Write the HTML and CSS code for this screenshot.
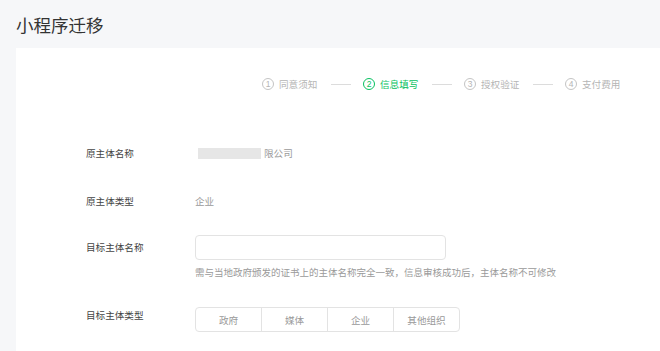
FILE: index.html
```html
<!DOCTYPE html>
<html lang="zh-CN">
<head>
<meta charset="utf-8">
<title>小程序迁移</title>
<link rel="stylesheet" href="styles.css">
</head>
<body>
<div class="page">
  <h1 class="title">小程序迁移</h1>
  <div class="card">
    <div class="steps">
      <div class="step"><span class="num">1</span><span class="step-text">同意须知</span></div>
      <span class="step-line"></span>
      <div class="step active"><span class="num">2</span><span class="step-text">信息填写</span></div>
      <span class="step-line"></span>
      <div class="step"><span class="num">3</span><span class="step-text">授权验证</span></div>
      <span class="step-line"></span>
      <div class="step"><span class="num">4</span><span class="step-text">支付费用</span></div>
    </div>
    <div class="form">
      <div class="row row-plain">
        <div class="label">原主体名称</div>
        <div class="value"><span class="mask"></span>限公司</div>
      </div>
      <div class="row row-plain row-2">
        <div class="label">原主体类型</div>
        <div class="value">企业</div>
      </div>
      <div class="row row-input">
        <div class="label label-tall">目标主体名称</div>
        <div class="field">
          <div class="input"></div>
          <div class="hint">需与当地政府颁发的证书上的主体名称完全一致，信息审核成功后，主体名称不可修改</div>
        </div>
      </div>
      <div class="row row-type">
        <div class="label">目标主体类型</div>
        <div class="btn-group">
          <span class="btn">政府</span>
          <span class="btn">媒体</span>
          <span class="btn">企业</span>
          <span class="btn">其他组织</span>
        </div>
      </div>
    </div>
  </div>
</div>
</body>
</html>
```
FILE: styles.css
```css
* { box-sizing: border-box; }
html, body {
  margin: 0;
  padding: 0;
  background: #f6f7f9;
  font-family: "Noto Sans CJK SC", "Noto Sans", sans-serif;
  color: #353535;
}
.page {
  width: 660px;
  height: 351px;
  overflow: hidden;
}
.title {
  margin: 0;
  padding: 12px 0 0 16px;
  height: 48px;
  font-size: 17.5px;
  line-height: 26px;
  font-weight: 400;
  color: #333;
}
.card {
  margin-left: 16px;
  background: #fff;
  height: 320px;
  padding: 29px 38px 0 70px;
}
.steps {
  display: flex;
  justify-content: flex-end;
  align-items: center;
  height: 14px;
  color: #b5b5b5;
  font-size: 9.6px;
}
.step {
  display: flex;
  align-items: center;
}
.num {
  width: 12px;
  height: 12px;
  border: 1px solid #c4c4c4;
  border-radius: 50%;
  display: inline-flex;
  align-items: center;
  justify-content: center;
  font-size: 8.5px;
  line-height: 1;
  margin-right: 5px;
  font-family: "Liberation Sans", sans-serif;
}
.step-text {
  width: 40px;
  white-space: nowrap;
  line-height: 14px;
}
.step.active { color: #07c160; }
.step.active .num { border-color: #07c160; }
.step-line {
  width: 20px;
  height: 1px;
  background: #dcdcdc;
  margin: 0 12px;
}
.form {
  margin-top: 50px;
  font-size: 9.6px;
}
.row {
  display: flex;
  align-items: flex-start;
}
.label {
  width: 109px;
  flex: none;
  line-height: 24px;
  color: #444;
}
.value {
  line-height: 24px;
  color: #9a9a9a;
  display: flex;
  align-items: center;
}
.mask {
  width: 63px;
  height: 11px;
  background: #e6e6e6;
  margin: 0 3px 0 3px;
}
.row-2 { margin-top: 24px; }
.row-input { margin-top: 22px; }
.label-tall { line-height: 25px; }
.input {
  width: 251px;
  height: 25px;
  border: 1px solid #e3e3e3;
  border-radius: 4px;
  background: #fff;
}
.hint {
  margin-top: 5px;
  line-height: 14px;
  color: #9a9a9a;
  font-size: 9.5px;
  white-space: nowrap;
}
.row-type { margin-top: 28px; }
.row-type .label { line-height: 16px; }
.btn-group {
  display: flex;
  border: 1px solid #e3e3e3;
  border-radius: 4px;
  height: 25px;
}
.btn {
  width: 66px;
  display: flex;
  align-items: center;
  justify-content: center;
  color: #9a9a9a;
  border-left: 1px solid #e3e3e3;
}
.btn:first-child { border-left: none; width: 65px; }
```
